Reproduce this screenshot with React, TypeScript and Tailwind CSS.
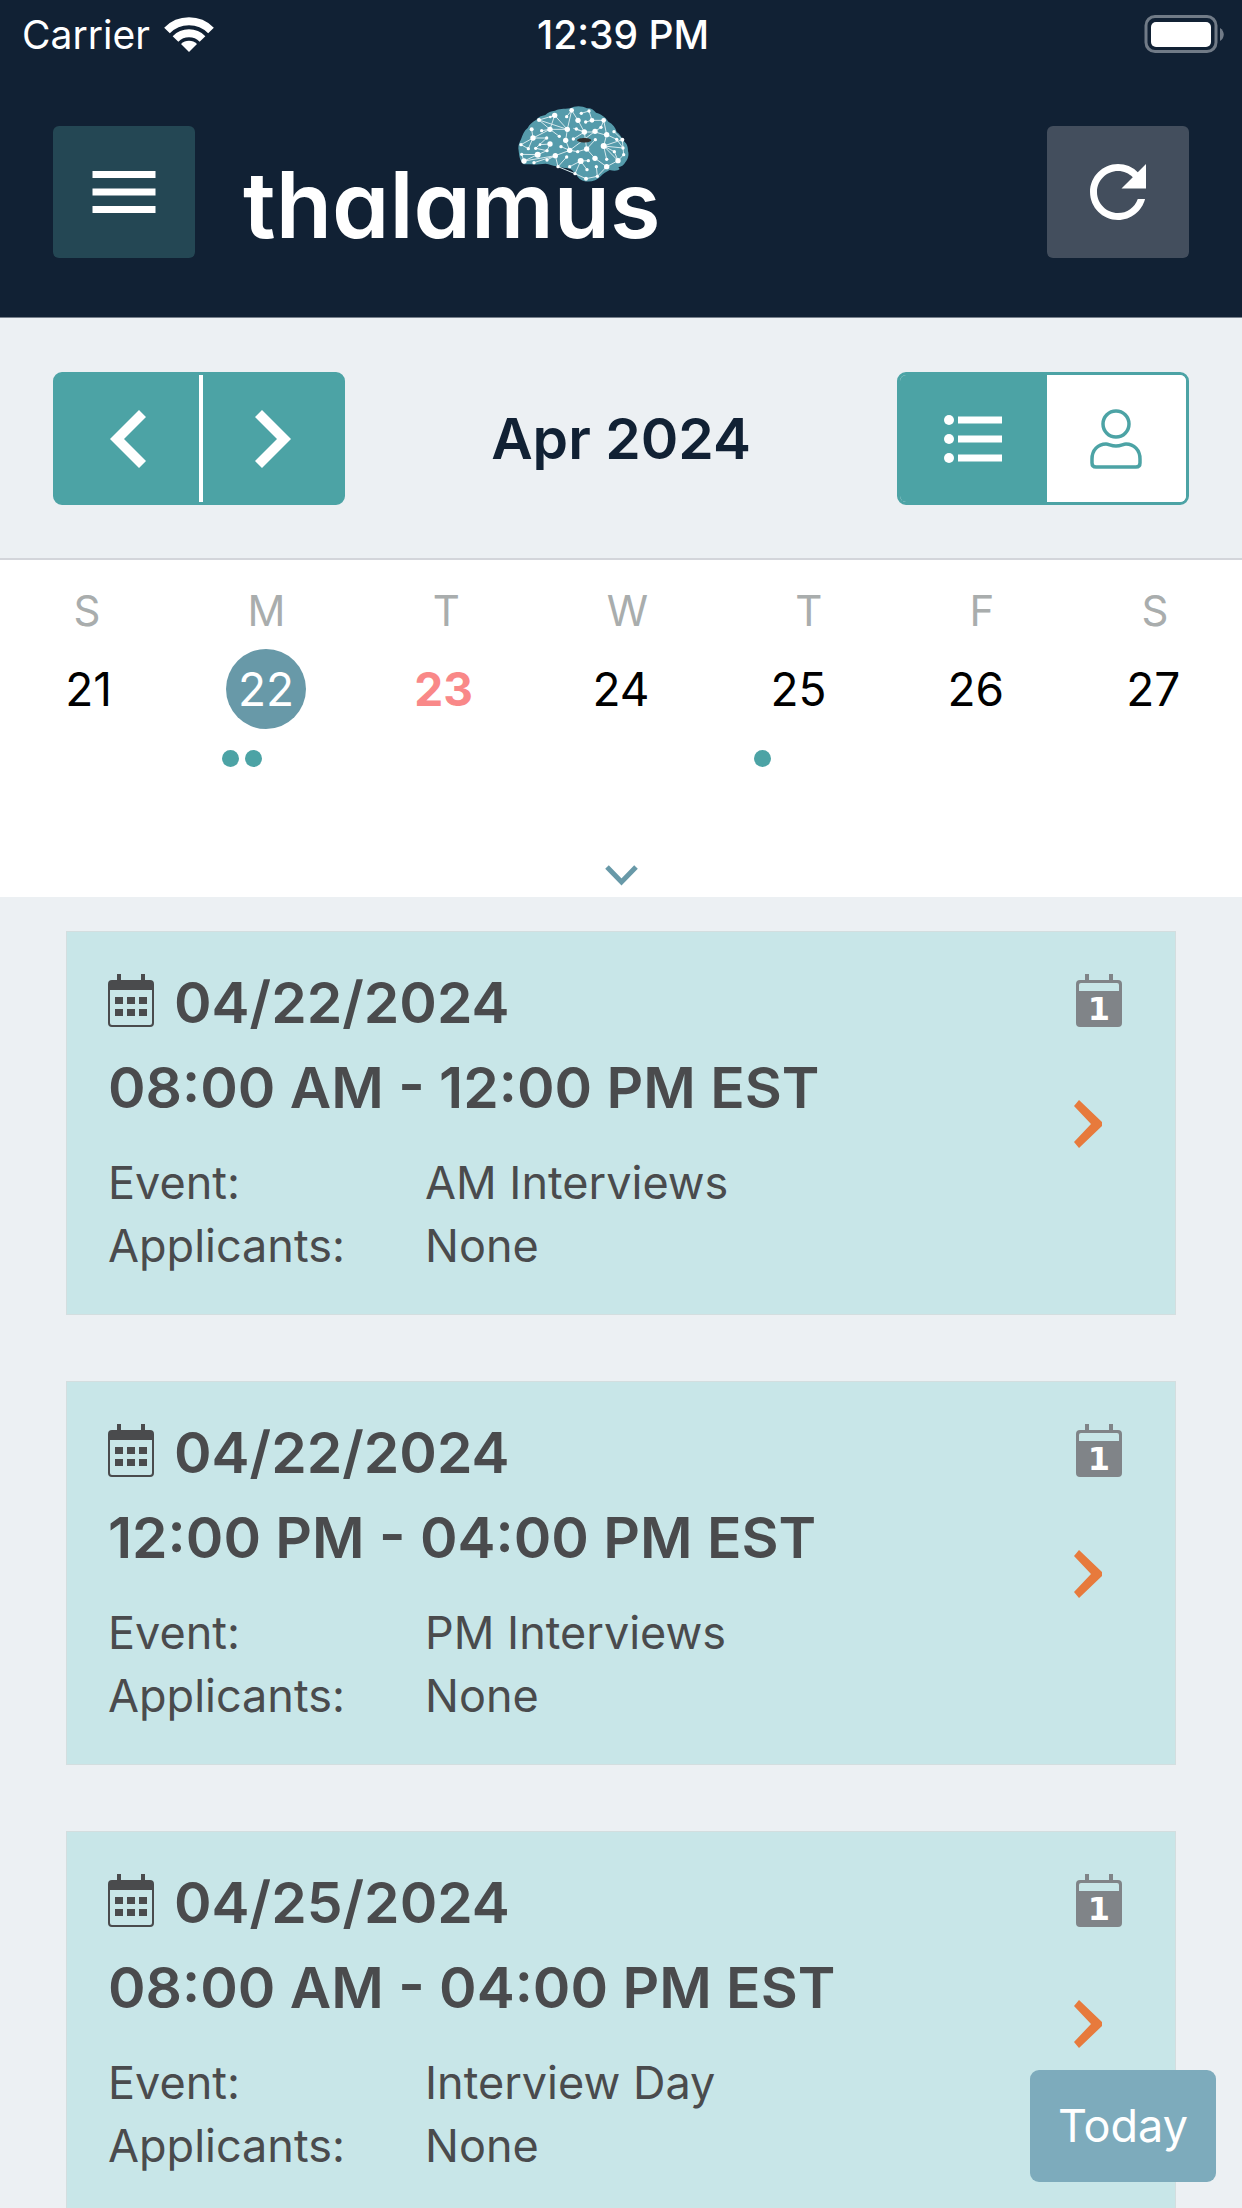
import { useState } from 'react';
import clsx from 'clsx';
import { MdMenu, MdRefresh } from 'react-icons/md';

interface ScheduleEvent {
  id: number;
  date: string;
  time: string;
  event: string;
  applicants: string;
}

const weekdays = ['S', 'M', 'T', 'W', 'T', 'F', 'S'];

const days = [
  { day: 21, events: 0 },
  { day: 22, events: 2 },
  { day: 23, events: 0, today: true },
  { day: 24, events: 0 },
  { day: 25, events: 1 },
  { day: 26, events: 0 },
  { day: 27, events: 0 },
];

const schedule: ScheduleEvent[] = [
  { id: 1, date: '04/22/2024', time: '08:00 AM - 12:00 PM EST', event: 'AM Interviews', applicants: 'None' },
  { id: 2, date: '04/22/2024', time: '12:00 PM - 04:00 PM EST', event: 'PM Interviews', applicants: 'None' },
  { id: 3, date: '04/25/2024', time: '08:00 AM - 04:00 PM EST', event: 'Interview Day', applicants: 'None' },
];

// [x, y, radius]
const neurons = [
  [161, 61, 8], [212, 46, 7], [241, 55, 5], [264, 48, 5], [114, 75, 6], [148, 66, 4], [197, 65, 5],
  [231, 76, 8], [254, 81, 5], [273, 76, 7], [308, 76, 7], [92, 103, 6], [122, 107, 5], [147, 103, 8],
  [199, 103, 8], [226, 102, 5], [250, 111, 8], [282, 109, 8], [300, 97, 5], [317, 119, 8], [339, 110, 5],
  [96, 129, 8], [137, 129, 5], [175, 124, 5], [194, 136, 8], [217, 132, 5], [283, 134, 5], [347, 133, 5],
  [364, 134, 6], [60, 149, 5], [82, 161, 5], [104, 160, 5], [117, 149, 4], [147, 147, 8], [138, 167, 5],
  [180, 155, 5], [206, 166, 8], [230, 170, 5], [257, 162, 8], [308, 153, 9], [340, 170, 5], [366, 159, 5],
  [62, 178, 5], [69, 198, 8], [110, 179, 9], [99, 203, 5], [138, 195, 5], [163, 182, 8], [197, 186, 5],
  [239, 198, 9], [262, 197, 5], [282, 190, 8], [317, 193, 5], [351, 197, 8], [368, 179, 5], [171, 215, 5],
  [206, 215, 5], [222, 236, 5], [258, 224, 5], [286, 215, 5], [317, 215, 8], [255, 251, 6], [289, 244, 5],
];

function BrainLogo() {
  return (
    <svg viewBox="0 0 450 300" className="absolute -top-[64px] left-[258px] h-[100px] w-[150px]" aria-hidden="true">
      <path
        fill="#559bab"
        d="M52 160c0-12 4-18 8-27 5-14 9-26 20-34 5-11 14-18 26-25 6-8 15-12 27-14 8-9 17-12 29-13 12-5 25-5 46-7 12-8 36-8 50 0 14-1 20 6 27 13 15 4 30 14 37 27 14 7 22 18 25 31 9 6 14 13 18 25 12 8 16 18 16 32 4 13-1 26-8 34-4 8-10 12-21 15l4 5c-5 6-18 6-30 3-12 6-18 10-27 19-12 15-37 19-53 13-14-4-15-14-23-20-8-12-16-18-32-18-12-1-20-3-25-5-13-2-20-7-32-8-22 3-38 2-66 2-14-13-13-27-16-48z"
      />
      <path
        fill="none"
        stroke="#d5e8ec"
        strokeWidth="3"
        d="M161 61 114 75M161 61l38 42M161 61l-14 42M148 66l13-5M114 75l33 28M114 75l85 28M212 46l-13 57M212 46l19 30M212 46l-15 19M241 55l23-7 9 28M254 81l19-5h35M308 76l9 43M308 76l-8 21-18 12M231 76l19 35M226 102l24 9h32l35 10M122 107l25-4-51 26-4-26M147 103l28 21M147 103l52 0-5 33 12 30M96 129h41M96 129l-14 32-22-12M96 129l-36 20M137 129l-33 31 34 7 9-20-30 2M217 132l33-21 7 51M283 134l-26 28M282 109l-76 57-26-11M206 166l-43 16M206 166l24 4 27-8 25 28M62 178l48 1 28-12M69 198l94-16M99 203l64-21M62 178l7 20M163 182l-25 13M163 182l8 33 26-29M69 198l41-19M317 119l30 14M317 119l-9 34 32 17M339 110l25 24M308 153l56-19M308 153l58 6M347 133l19 26 2 20-17 18M308 153l9 40M308 153l43 44M340 170l11 27-34 18M282 190l35 25-28 29M239 198l23-1M239 198l19 26M239 198l-33 17M239 198l-17 38 33 15 34-7-3-29M171 215l51 21M250 111l-33-11M364 134l2 25"
      />
      {neurons.map(([x, y, r], i) => (
        <circle key={i} cx={x} cy={y} r={r} fill="#fff" />
      ))}
      <path fill="#33302f" d="M228 136c3-9 40-9 43 0-3 9-40 9-43 0z" />
    </svg>
  );
}

function CalendarIcon() {
  return (
    <svg viewBox="0 0 46 53" className="mt-3.5 h-[53px] w-[46px] shrink-0" fill="#4a4b4d" aria-hidden="true">
      <path d="M9 0h4v8H9zM33 0h4v8h-4z" />
      <path
        fillRule="evenodd"
        d="M4 6h38a4 4 0 0 1 4 4v39a4 4 0 0 1-4 4H4a4 4 0 0 1-4-4V10a4 4 0 0 1 4-4zM2 16v33a2 2 0 0 0 2 2h38a2 2 0 0 0 2-2V16z"
      />
      <path d="M7 23h8v7H7zM19 23h8v7h-8zM31 23h8v7h-8zM7 35h8v7H7zM19 35h8v7h-8zM31 35h8v7h-8z" />
    </svg>
  );
}

function DayCountIcon({ count }: { count: number }) {
  return (
    <svg viewBox="0 0 46 53" className="h-[53px] w-[46px] self-end overflow-visible" fill="#808488" role="img" aria-label="Events">
      <path d="M9 0h4v8H9zM33 0h4v8h-4z" />
      <path
        fillRule="evenodd"
        d="M4 6h38a4 4 0 0 1 4 4v39a4 4 0 0 1-4 4H4a4 4 0 0 1-4-4V10a4 4 0 0 1 4-4zM5 9a2 2 0 0 0-2 2v6h40v-6a2 2 0 0 0-2-2z"
      />
      <text x="23" y="46" fontSize="32" fontWeight="700" fontFamily="DejaVu Sans, sans-serif" textAnchor="middle" fill="#fff">
        {count}
      </text>
    </svg>
  );
}

function StatusBar() {
  return (
    <div className="grid h-[68px] grid-cols-3 items-center pr-[18px] pl-[22px] text-[39px] leading-none text-white">
      <div className="flex items-center gap-3.5">
        <span>Carrier</span>
        <svg viewBox="0 0 50 36" className="h-9 w-[50px]" fill="none" stroke="#fff" aria-hidden="true">
          <path strokeWidth="8" d="M3 14.500a31 31 0 0 1 44 0" />
          <path strokeWidth="8" d="M11.500 23a19 19 0 0 1 27 0" />
          <path fill="#fff" stroke="none" d="m25 36-8-8a11.500 11.500 0 0 1 16 0z" />
        </svg>
      </div>
      <span className="text-center font-medium">12:39 PM</span>
      <svg viewBox="0 0 80 38" className="h-[38px] w-20 justify-self-end" aria-hidden="true">
        <rect x="2" y="1.500" width="70" height="35" rx="9" fill="none" stroke="#717b87" strokeWidth="3" />
        <rect x="7" y="7" width="60" height="25" rx="5" fill="#fff" />
        <path fill="#717b87" d="M76 13c5 3 5 10 0 13z" />
      </svg>
    </div>
  );
}

function EventCard({ item }: { item: ScheduleEvent }) {
  return (
    <article className="flex border border-[#d3dedf] bg-[#c8e6e8] pt-7 pr-[53px] pb-[37px] pl-[41px] text-[#4a4b4d]">
      <div className="flex-1">
        <h2 className="text-[57px] leading-[85px] font-semibold">
          <span className="flex items-start gap-5">
            <CalendarIcon />
            {item.date}
          </span>
          <span className="block">{item.time}</span>
        </h2>
        <dl className="mt-[21px] grid grid-cols-[317px_1fr] text-[45px] leading-[63px]">
          <dt>Event:</dt>
          <dd>{item.event}</dd>
          <dt>Applicants:</dt>
          <dd>{item.applicants}</dd>
        </dl>
      </div>
      <div className="flex w-12 flex-col items-start gap-[73px] pt-3.5">
        <DayCountIcon count={1} />
        <button type="button" aria-label="Open event">
          <svg viewBox="0 0 28 48" className="h-12 w-7" fill="#e77a3c" aria-hidden="true">
            <path d="M5 0 28 22v4L5 48l-5-6 17-18L0 6z" />
          </svg>
        </button>
      </div>
    </article>
  );
}

export default function App() {
  const [selected, setSelected] = useState(22);
  const [view, setView] = useState('list');

  return (
    <div className="relative flex h-screen flex-col overflow-hidden bg-[#ecf0f3] font-['Inter',sans-serif]">
      {/* Header */}
      <header className="border-b border-[#77808c] bg-[#112134]">
        <StatusBar />
        <div className="flex items-center px-[53px] pt-[58px] pb-[59px]">
          <button type="button" aria-label="Menu" className="flex h-[132px] w-[142px] items-center justify-center rounded-md bg-[#244754] text-white">
            <MdMenu className="size-[84px]" />
          </button>
          <div className="relative ml-12 self-end pb-[7px] text-[92px] leading-none font-semibold text-white [font-feature-settings:'cv11']">
            thalamus
            <BrainLogo />
          </div>
          <button type="button" aria-label="Refresh" className="ml-auto flex h-[132px] w-[142px] items-center justify-center rounded-md bg-[#434e5d] text-white">
            <MdRefresh className="size-[84px]" />
          </button>
        </div>
      </header>

      {/* Month navigation */}
      <div className="flex items-center justify-between border-b-2 border-[#d3d5da] px-[53px] pt-[54px] pb-[53px]">
        <div className="grid h-[133px] w-[292px] grid-cols-[147px_1fr] divide-x-4 divide-white rounded-[9px] border-3 border-[#4ca3a5] bg-[#4ca3a5]">
          <button type="button" aria-label="Previous week" className="flex items-center justify-center">
            <svg viewBox="0 0 36 58" className="h-[58px] w-9" fill="#fff" aria-hidden="true">
              <path d="m29 0 7 7-22 22 22 22-7 7L0 29z" />
            </svg>
          </button>
          <button type="button" aria-label="Next week" className="flex items-center justify-center">
            <svg viewBox="0 0 36 58" className="h-[58px] w-9" fill="#fff" aria-hidden="true">
              <path d="M7 0 0 7l22 22L0 51l7 7 29-29z" />
            </svg>
          </button>
        </div>
        <h1 className="text-[57px] leading-none font-semibold text-[#112134]">Apr 2024</h1>
        <div className="grid h-[133px] w-[292px] grid-cols-[147px_1fr] overflow-hidden rounded-[9px] border-3 border-[#4ca3a5]">
          <button
            type="button"
            aria-label="List view"
            onClick={() => setView('list')}
            className={clsx('flex items-center justify-center', view === 'list' ? 'bg-[#4ca3a5] text-white' : 'bg-white text-[#4ca3a5]')}
          >
            <svg viewBox="0 0 58 50" className="h-[50px] w-[58px]" fill="currentColor" aria-hidden="true">
              <circle cx="5" cy="6" r="5" />
              <circle cx="5" cy="25" r="5" />
              <circle cx="5" cy="44" r="5" />
              <path d="M14 2.500h44v7H14zM14 21.500h44v7H14zM14 40.500h44v7H14z" />
            </svg>
          </button>
          <button
            type="button"
            aria-label="Person view"
            onClick={() => setView('person')}
            className={clsx('flex items-center justify-center', view === 'person' ? 'bg-[#4ca3a5] text-white' : 'bg-white text-[#4ca3a5]')}
          >
            <svg viewBox="0 0 52 60" className="h-[60px] w-[52px]" fill="none" stroke="currentColor" strokeWidth="3.500" aria-hidden="true">
              <circle cx="26" cy="15" r="13" />
              <path d="M16 35c-8 0-14 6-14 15v4c0 3 2 4 4 4h40c2 0 4-1 4-4v-4c0-9-6-15-14-15-3 0-5 2-10 2s-7-2-10-2z" />
            </svg>
          </button>
        </div>
      </div>

      {/* Week strip */}
      <section className="bg-white pt-[26px] pb-[11px]">
        <div className="flex justify-around text-[42px] leading-[50px] text-[#a9adad]">
          {weekdays.map((label, i) => (
            <span key={i}>{label}</span>
          ))}
        </div>
        <div className="mt-[13px] grid grid-cols-7">
          {days.map(({ day, events, today }) => (
            <button key={day} type="button" onClick={() => setSelected(day)} className="flex flex-col items-center gap-[21px]">
              <span
                className={clsx(
                  'flex size-20 items-center justify-center rounded-full text-[46px]',
                  day === selected && 'bg-[#6899a8] text-white',
                  day !== selected && today && 'font-bold text-[#f98888]',
                  day !== selected && !today && 'text-black',
                )}
              >
                {day}
              </span>
              <span className="flex h-[17px] w-full gap-1.5 pl-[25%]">
                {Array.from({ length: events }, (_, i) => (
                  <span key={i} className="size-[17px] rounded-full bg-[#4ca3a5]" />
                ))}
              </span>
            </button>
          ))}
        </div>
        <button type="button" aria-label="Expand calendar" className="mx-auto mt-[98px] block">
          <svg viewBox="0 0 33 21" className="h-[21px] w-[33px]" fill="none" stroke="#6899a8" strokeWidth="5" aria-hidden="true">
            <path d="m2 2 14.500 15L31 2" />
          </svg>
        </button>
      </section>

      {/* Events */}
      <main className="flex min-h-0 flex-1 flex-col gap-[66px] overflow-y-auto px-[66px] pt-[34px] [scrollbar-width:none]">
        {schedule.map((item) => (
          <EventCard key={item.id} item={item} />
        ))}
      </main>

      <button type="button" className="absolute right-[26px] bottom-[26px] h-28 w-[186px] rounded-[9px] bg-[#7dabbc] text-[45px] text-white">
        Today
      </button>
    </div>
  );
}
